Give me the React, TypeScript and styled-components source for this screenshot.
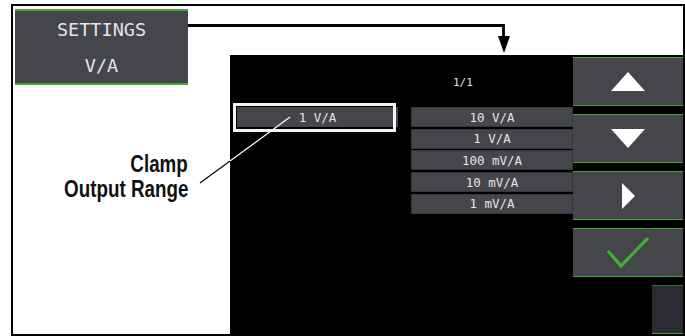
import React from "react";
import styled, { createGlobalStyle } from "styled-components";

const GlobalStyle = createGlobalStyle`
  html, body {
    margin: 0;
    padding: 0;
    background: #fff;
    overflow: hidden;
  }
`;

const ranges = ["10 V/A", "1 V/A", "100 mV/A", "10 mV/A", "1 mV/A"];

const App: React.FC = () => {
  return (
    <StyledPage>
      <GlobalStyle />
      <StyledFrame>
        <StyledLeftCol>
          <StyledSettingsBox>
            <span>SETTINGS</span>
            <span>V/A</span>
          </StyledSettingsBox>
          <StyledCaption>
            <StyledCaptionLine>Clamp</StyledCaptionLine>
            <StyledCaptionLine>Output Range</StyledCaptionLine>
          </StyledCaption>
        </StyledLeftCol>

        <StyledScreen>
          <StyledMainArea>
            <StyledPageLabel>1/1</StyledPageLabel>
            <StyledSelected>1 V/A</StyledSelected>
            <StyledList>
              {ranges.map((r) => (
                <StyledRow key={r}>{r}</StyledRow>
              ))}
            </StyledList>
          </StyledMainArea>

          <StyledButtonCol>
            <StyledButton>
              <svg width="34" height="19" viewBox="0 0 34 19">
                <polygon points="17,0 34,19 0,19" fill="#fff" />
              </svg>
            </StyledButton>
            <StyledButton>
              <svg width="34" height="19" viewBox="0 0 34 19">
                <polygon points="0,0 34,0 17,19" fill="#fff" />
              </svg>
            </StyledButton>
            <StyledButton>
              <svg width="13" height="26" viewBox="0 0 13 26">
                <polygon points="0,0 13,13 0,26" fill="#fff" />
              </svg>
            </StyledButton>
            <StyledButton>
              <svg width="44" height="34" viewBox="0 0 44 34">
                <polyline
                  points="2,15 15,30 42,2"
                  fill="none"
                  stroke="#3fb138"
                  strokeWidth="3.2"
                />
              </svg>
            </StyledButton>
            <StyledSmallButton />
          </StyledButtonCol>
        </StyledScreen>
      </StyledFrame>

      {/* annotation lines drawn over the picture */}
      <StyledOverlay width="685" height="336" viewBox="0 0 685 336">
        <polyline
          points="188,25.5 503.5,25.5 503.5,40"
          fill="none"
          stroke="#000"
          strokeWidth="2.8"
        />
        <polygon points="498,36 510,36 504,53" fill="#000" />
        <line x1="200" y1="183" x2="230" y2="161" stroke="#000" strokeWidth="1.2" />
        <line x1="230" y1="161" x2="290" y2="117" stroke="#fff" strokeWidth="1.2" />
      </StyledOverlay>
    </StyledPage>
  );
};

const green = "#3dab33";
const panelGrey = "#45464b";

const StyledPage = styled.div`
  position: relative;
  width: 685px;
  height: 336px;
  box-sizing: border-box;
  padding: 4px 0 0 11px;
`;

const StyledFrame = styled.div`
  width: 674px;
  height: 332px;
  box-sizing: border-box;
  border: 2px solid #000;
  display: grid;
  grid-template-columns: 217px 1fr;
`;

const StyledLeftCol = styled.div`
  display: flex;
  flex-direction: column;
  padding: 3px 0 0 2px;
`;

const StyledSettingsBox = styled.div`
  width: 173px;
  height: 76px;
  box-sizing: border-box;
  background: ${panelGrey};
  border-top: 2px solid ${green};
  border-bottom: 2px solid ${green};
  display: grid;
  grid-template-rows: 1fr 1fr;
  align-items: center;
  justify-items: center;
  color: #e4e4e4;
  font-family: "DejaVu Sans Mono", monospace;
  font-size: 18.5px;
`;

const StyledCaption = styled.div`
  margin-top: 67px;
  padding-right: 42px;
  display: flex;
  flex-direction: column;
  align-items: flex-end;
  color: #111;
  font-family: "Liberation Sans", Arial, sans-serif;
  font-weight: 700;
  font-size: 23.5px;
  line-height: 25px;
`;

const StyledCaptionLine = styled.span`
  display: block;
  white-space: nowrap;
  transform: scaleX(0.8);
  transform-origin: right center;
`;

const StyledScreen = styled.div`
  margin-top: 49px;
  background: #000;
  display: grid;
  grid-template-columns: 343px 110px;
`;

const StyledMainArea = styled.div`
  display: grid;
  grid-template-columns: 174px 162px;
  grid-template-rows: auto 1fr;
  align-content: start;
  padding: 21px 0 0 7px;
  font-family: "DejaVu Sans Mono", monospace;
  color: #e4e4e4;
`;

const StyledPageLabel = styled.div`
  grid-column: 1 / span 2;
  padding-left: 216px;
  font-size: 11px;
  line-height: 13px;
  margin-bottom: 18px;
`;

const StyledSelected = styled.div`
  position: relative;
  width: 161px;
  height: 20px;
  background: ${panelGrey};
  display: flex;
  align-items: center;
  justify-content: center;
  font-size: 12.5px;

  &::before {
    content: "";
    position: absolute;
    left: -4px;
    top: -4px;
    width: 163px;
    height: 29px;
    box-sizing: border-box;
    border: 3px solid #f4f4f4;
  }
`;

const StyledList = styled.div`
  display: flex;
  flex-direction: column;
  gap: 1.7px;
`;

const StyledRow = styled.div`
  height: 20px;
  box-sizing: border-box;
  background: ${panelGrey};
  border: 1px solid #35363a;
  display: flex;
  align-items: center;
  justify-content: center;
  font-size: 12.5px;
`;

const StyledButtonCol = styled.div`
  display: flex;
  flex-direction: column;
  gap: 8px;
  padding-top: 2px;
`;

const StyledButton = styled.div`
  height: 49px;
  box-sizing: border-box;
  background: ${panelGrey};
  border-top: 1.5px solid ${green};
  border-bottom: 1.5px solid ${green};
  display: flex;
  align-items: center;
  justify-content: center;
`;

const StyledSmallButton = styled.div`
  align-self: flex-end;
  width: 31px;
  height: 49px;
  box-sizing: border-box;
  background: #2b2c33;
  border-top: 1px solid #3f6a3a;
  border-bottom: 1.5px solid ${green};
`;

const StyledOverlay = styled.svg`
  position: absolute;
  top: 0;
  left: 0;
  pointer-events: none;
`;

export default App;
